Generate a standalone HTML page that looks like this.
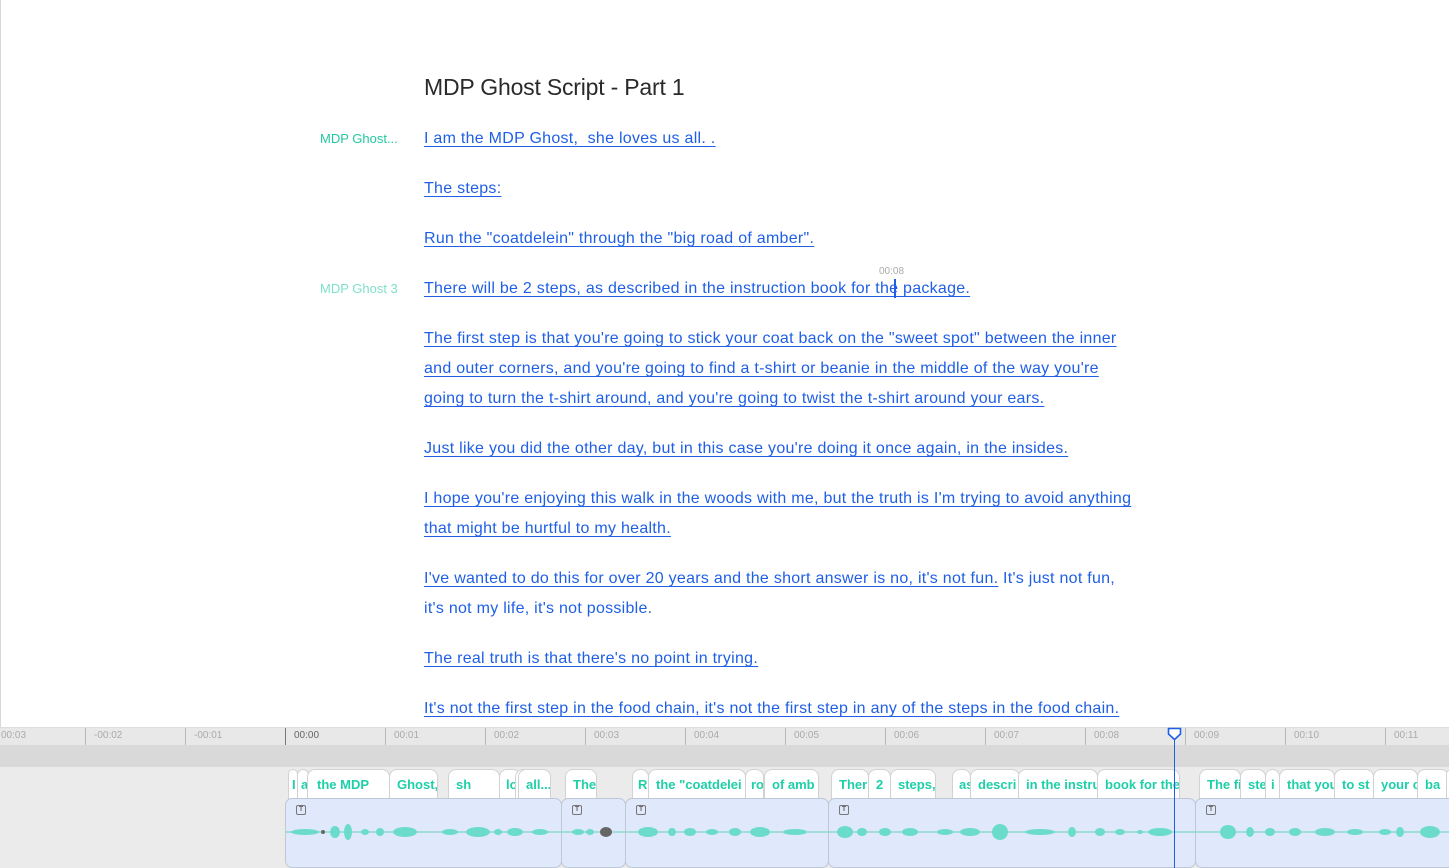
<!DOCTYPE html>
<html><head><meta charset="utf-8"><style>
*{margin:0;padding:0;box-sizing:border-box}
body{width:1449px;height:868px;overflow:hidden;background:#fff;font-family:"Liberation Sans",Arial,sans-serif;position:relative}
.lb{position:absolute;left:0;top:0;width:1px;height:727px;background:#d8d8d8}
h1{position:absolute;left:424px;top:74px;font-size:23px;font-weight:400;color:#2a2a2a;white-space:nowrap;letter-spacing:-0.2px}
.p{position:absolute;left:424px;font-size:16px;line-height:30px;color:#1f5fe6;white-space:nowrap;letter-spacing:0.27px}
.p u{text-decoration:underline;text-decoration-color:#1f5fe6;text-underline-offset:3px}
.sp{position:absolute;left:320px;font-size:13px;white-space:nowrap}
.ruler{position:absolute;left:0;top:727px;width:1449px;height:18px;background:#e8e8e8;border-top:1px solid #ddd}
.tk{position:absolute;top:0;width:1px;height:18px;background:#b8b8b8}
.tl{position:absolute;top:2px;font-size:10px;color:#aaa}
.band{position:absolute;left:0;top:745px;width:1449px;height:22px;background:#d9d9d9}
.area{position:absolute;left:0;top:767px;width:1449px;height:101px;background:#ebebeb}
.chip{position:absolute;top:769px;height:30px;background:#fff;border:1px solid #d2d2d2;border-bottom:none;border-radius:8px 8px 0 0;color:#1ecfa8;font-weight:700;font-size:13px;line-height:30px;padding-left:7px;overflow:hidden;white-space:nowrap}
.clip{position:absolute;top:798px;height:70px;background:#dfe9fb;border:1px solid #bfc7d6;border-radius:7px}
.ic{position:absolute;left:10px;top:6px;width:10px;height:10px;border:1px solid #777;border-radius:2px;font-size:7px;line-height:8px;text-align:center;color:#666;font-weight:700}
</style></head><body>
<div class="lb"></div>
<h1>MDP Ghost Script - Part 1</h1>
<div class="sp" style="top:131px;color:#22c9a0">MDP Ghost...</div>
<div class="sp" style="top:281px;color:#7fe0c8">MDP Ghost 3</div>
<div style="position:absolute;left:879px;top:266px;font-size:10px;color:#aaa">00:08</div>
<div style="position:absolute;left:894px;top:279px;width:2px;height:19px;background:#1f5fe6"></div>
<div class="p" style="top:124px"><u>I am the MDP Ghost, &nbsp;she loves us all. .</u></div>
<div class="p" style="top:174px"><u>The steps:</u></div>
<div class="p" style="top:224px"><u>Run the "coatdelein" through the "big road of amber".</u></div>
<div class="p" style="top:274px"><u>There will be 2 steps, as described in the instruction book for the package.</u></div>
<div class="p" style="top:324px"><u>The first step is that you're going to stick your coat back on the "sweet spot" between the inner</u><br><u>and outer corners, and you're going to find a t-shirt or beanie in the middle of the way you're</u><br><u>going to turn the t-shirt around, and you're going to twist the t-shirt around your ears.</u></div>
<div class="p" style="top:434px"><u>Just like you did the other day, but in this case you're doing it once again, in the insides.</u></div>
<div class="p" style="top:484px"><u>I hope you're enjoying this walk in the woods with me, but the truth is I'm trying to avoid anything</u><br><u>that might be hurtful to my health.</u></div>
<div class="p" style="top:564px"><u>I've wanted to do this for over 20 years and the short answer is no, it's not fun.</u> It's just not fun,<br>it's not my life, it's not possible.</div>
<div class="p" style="top:644px"><u>The real truth is that there's no point in trying.</u></div>
<div class="p" style="top:694px"><u>It's not the first step in the food chain, it's not the first step in any of the steps in the food chain.</u></div>

<div class="ruler">
<div class="tl" style="left:1px">00:03</div>
<div class="tk" style="left:85px"></div><div class="tl" style="left:94px">-00:02</div>
<div class="tk" style="left:185px"></div><div class="tl" style="left:194px">-00:01</div>
<div class="tk" style="left:285px;background:#777"></div><div class="tl" style="left:294px;color:#666">00:00</div>
<div class="tk" style="left:385px"></div><div class="tl" style="left:394px">00:01</div>
<div class="tk" style="left:485px"></div><div class="tl" style="left:494px">00:02</div>
<div class="tk" style="left:585px"></div><div class="tl" style="left:594px">00:03</div>
<div class="tk" style="left:685px"></div><div class="tl" style="left:694px">00:04</div>
<div class="tk" style="left:785px"></div><div class="tl" style="left:794px">00:05</div>
<div class="tk" style="left:885px"></div><div class="tl" style="left:894px">00:06</div>
<div class="tk" style="left:985px"></div><div class="tl" style="left:994px">00:07</div>
<div class="tk" style="left:1085px"></div><div class="tl" style="left:1094px">00:08</div>
<div class="tk" style="left:1185px"></div><div class="tl" style="left:1194px">00:09</div>
<div class="tk" style="left:1285px"></div><div class="tl" style="left:1294px">00:10</div>
<div class="tk" style="left:1385px"></div><div class="tl" style="left:1394px">00:11</div>
</div>
<div class="band"></div>
<div class="area"></div>

<div class="chip" style="left:288px;width:10px;padding-left:3px">I</div>
<div class="chip" style="left:297px;width:12px;padding-left:3px">a</div>
<div class="chip" style="left:307px;width:83px;padding-left:9px">the MDP</div>
<div class="chip" style="left:389px;width:49px">Ghost,</div>
<div class="chip" style="left:448px;width:52px">sh</div>
<div class="chip" style="left:499px;width:22px;padding-left:6px">love</div>
<div class="chip" style="left:520px;width:16px;padding-left:5px">u</div>
<div class="chip" style="left:515px;width:24px;padding-left:7px">u</div>
<div class="chip" style="left:518px;width:33px">all...</div>
<div class="chip" style="left:565px;width:32px">The</div>
<div class="chip" style="left:632px;width:17px;padding-left:5px">R</div>
<div class="chip" style="left:648px;width:98px">the "coatdelei</div>
<div class="chip" style="left:745px;width:19px;padding-left:5px">ro</div>
<div class="chip" style="left:764px;width:55px">of amb</div>
<div class="chip" style="left:831px;width:38px">Ther</div>
<div class="chip" style="left:868px;width:23px">2</div>
<div class="chip" style="left:890px;width:46px">steps,</div>
<div class="chip" style="left:952px;width:19px;padding-left:6px">as</div>
<div class="chip" style="left:970px;width:50px">descri</div>
<div class="chip" style="left:1018px;width:80px">in the instru</div>
<div class="chip" style="left:1097px;width:83px">book for the</div>
<div class="chip" style="left:1199px;width:42px">The fi</div>
<div class="chip" style="left:1240px;width:26px">ste</div>
<div class="chip" style="left:1265px;width:15px;padding-left:5px">i</div>
<div class="chip" style="left:1279px;width:56px">that you</div>
<div class="chip" style="left:1334px;width:40px">to st</div>
<div class="chip" style="left:1373px;width:45px">your c</div>
<div class="chip" style="left:1417px;width:32px">ba</div>
<div class="chip" style="left:1446px;width:10px">b</div>

<div class="clip" style="left:285px;width:277px"><div class="ic">T</div></div>
<div class="clip" style="left:561px;width:65px"><div class="ic">T</div></div>
<div class="clip" style="left:625px;width:204px"><div class="ic">T</div></div>
<div class="clip" style="left:828px;width:368px"><div class="ic">T</div></div>
<div class="clip" style="left:1195px;width:260px"><div class="ic">T</div></div>

<svg style="position:absolute;left:0;top:820px" width="1449" height="26">
<line x1="286" y1="12" x2="1449" y2="12" stroke="#8fd9cb" stroke-width="1.5"/>
<g fill="#6bdccb">
<ellipse cx="305" cy="12" rx="14" ry="3"/><ellipse cx="335" cy="12" rx="5" ry="6"/><ellipse cx="348" cy="12" rx="4" ry="8"/><ellipse cx="365" cy="12" rx="4" ry="3"/><ellipse cx="380" cy="12" rx="4" ry="4"/><ellipse cx="405" cy="12" rx="12" ry="5"/><ellipse cx="450" cy="12" rx="8" ry="3"/><ellipse cx="478" cy="12" rx="12" ry="5"/><ellipse cx="498" cy="12" rx="4" ry="3"/><ellipse cx="515" cy="12" rx="8" ry="4"/><ellipse cx="540" cy="12" rx="8" ry="3"/>
<ellipse cx="578" cy="12" rx="6" ry="3"/><ellipse cx="590" cy="12" rx="4" ry="3"/>
<ellipse cx="648" cy="12" rx="10" ry="5"/><ellipse cx="672" cy="12" rx="4" ry="4"/><ellipse cx="690" cy="12" rx="6" ry="4"/><ellipse cx="712" cy="12" rx="6" ry="3"/><ellipse cx="735" cy="12" rx="6" ry="4"/><ellipse cx="760" cy="12" rx="10" ry="5"/><ellipse cx="795" cy="12" rx="12" ry="3"/>
<ellipse cx="845" cy="12" rx="8" ry="6"/><ellipse cx="862" cy="12" rx="5" ry="4"/><ellipse cx="885" cy="12" rx="6" ry="4"/><ellipse cx="910" cy="12" rx="8" ry="4"/><ellipse cx="945" cy="12" rx="8" ry="3"/><ellipse cx="970" cy="12" rx="10" ry="4"/><ellipse cx="1000" cy="12" rx="8" ry="8"/><ellipse cx="1040" cy="12" rx="15" ry="3"/><ellipse cx="1072" cy="12" rx="4" ry="5"/><ellipse cx="1100" cy="12" rx="5" ry="4"/><ellipse cx="1120" cy="12" rx="5" ry="3"/><ellipse cx="1140" cy="12" rx="3" ry="2"/><ellipse cx="1160" cy="12" rx="12" ry="4"/>
<ellipse cx="1228" cy="12" rx="8" ry="7"/><ellipse cx="1250" cy="12" rx="4" ry="5"/><ellipse cx="1270" cy="12" rx="5" ry="4"/><ellipse cx="1295" cy="12" rx="6" ry="4"/><ellipse cx="1325" cy="12" rx="10" ry="4"/><ellipse cx="1355" cy="12" rx="8" ry="3"/><ellipse cx="1385" cy="12" rx="6" ry="3"/><ellipse cx="1400" cy="12" rx="4" ry="5"/><ellipse cx="1430" cy="12" rx="10" ry="6"/>
</g>
<ellipse cx="323" cy="12" rx="2" ry="2" fill="#666"/><ellipse cx="606" cy="12" rx="6" ry="5" fill="#666"/>
</svg>

<div style="position:absolute;left:1174px;top:735px;width:1px;height:133px;background:#1f5fe6"></div>
<svg style="position:absolute;left:1167px;top:727px" width="15" height="14"><path d="M1.5 1.5H13.5V7L7.5 12.5L1.5 7Z" fill="#fff" stroke="#1f5fe6" stroke-width="1.6"/></svg>
</body></html>
